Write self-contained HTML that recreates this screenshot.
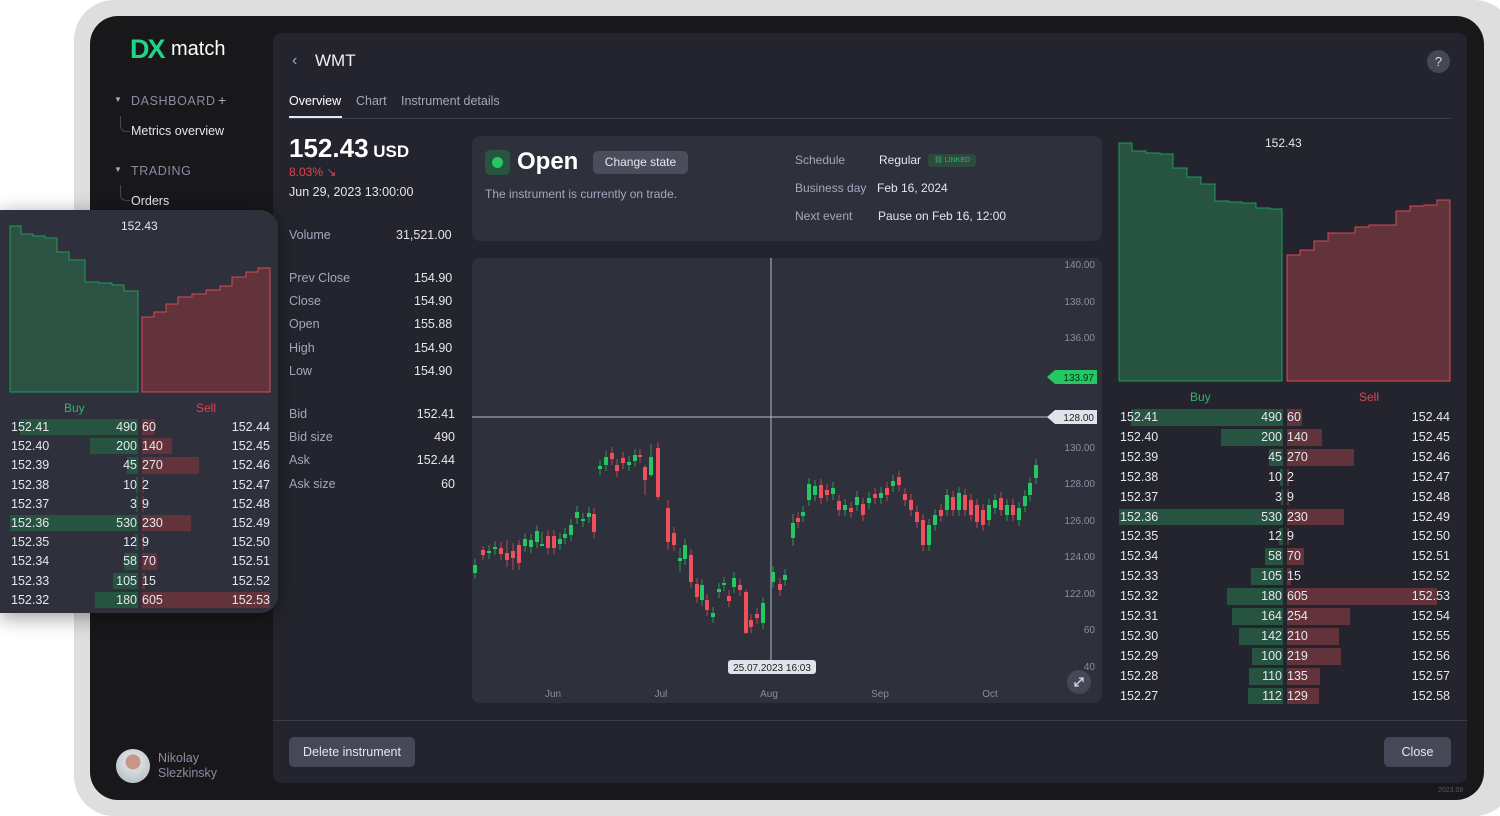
<!DOCTYPE html>
<html><head><meta charset="utf-8">
<style>
*{box-sizing:border-box;margin:0;padding:0}
body{width:1500px;height:816px;overflow:hidden;background:#fff;font-family:"Liberation Sans",sans-serif;position:relative;color:#e6e7ec}
.abs{position:absolute}
.frame{left:74px;top:0;width:1440px;height:816px;background:#dedede;border-radius:40px}
.dev{left:90px;top:16px;width:1394px;height:784px;background:#18181b;border-radius:28px}
.main{left:273px;top:33px;width:1194px;height:750px;background:#23242d;border-radius:8px}
.t{position:absolute;white-space:nowrap}
.muted{color:#a5a8bd}
.card{background:#2e303b;border-radius:8px}
.row{position:absolute;height:18px;font-size:12.5px;line-height:18px}
</style></head><body>
<div class="abs frame"></div>
<div class="abs dev"></div>
<div class="abs main"></div>

<!-- sidebar -->
<div class="t" style="left:130px;top:34px;font-size:27px;font-weight:bold;color:#1fd685;letter-spacing:-2px">DX</div>
<div class="t" style="left:171px;top:38px;font-size:20px;color:#fff">match</div>
<div class="t muted" style="left:114px;top:95px;font-size:8px">▼</div>
<div class="t" style="left:131px;top:94px;font-size:12.5px;letter-spacing:0.6px;color:#8a8da2">DASHBOARD</div>
<div class="t" style="left:218px;top:92px;font-size:14px;color:#a5a8bd">+</div>
<div class="abs" style="left:120px;top:116px;width:10px;height:16px;border-left:1px solid #44465a;border-bottom:1px solid #44465a;border-bottom-left-radius:6px"></div>
<div class="t" style="left:131px;top:124px;font-size:12.5px;color:#e6e7ec">Metrics overview</div>
<div class="t muted" style="left:114px;top:165px;font-size:8px">▼</div>
<div class="t" style="left:131px;top:164px;font-size:12.5px;letter-spacing:0.6px;color:#8a8da2">TRADING</div>
<div class="abs" style="left:120px;top:185px;width:10px;height:16px;border-left:1px solid #44465a;border-bottom:1px solid #44465a;border-bottom-left-radius:6px"></div>
<div class="t" style="left:131px;top:194px;font-size:12.5px">Orders</div>
<div class="abs" style="left:116px;top:749px;width:34px;height:34px;border-radius:50%;background:radial-gradient(circle at 50% 38%,#c99585 0 7px,#d8dde0 8px,#aab5bb 100%)"></div>
<div class="t" style="left:158px;top:751px;font-size:12.5px;color:#8a8da2;line-height:15px">Nikolay<br>Slezkinsky</div>

<!-- header -->
<div class="t" style="left:292px;top:52px;font-size:16px;color:#a5a8bd">‹</div>
<div class="t" style="left:315px;top:51px;font-size:17px;color:#f0f0f4">WMT</div>
<div class="abs" style="left:1427px;top:50px;width:23px;height:23px;border-radius:50%;background:#454857;color:#d8d9e0;font-size:13px;text-align:center;line-height:23px">?</div>
<div class="t" style="left:289px;top:94px;font-size:12.5px;color:#fff">Overview</div>
<div class="t muted" style="left:356px;top:94px;font-size:12.5px">Chart</div>
<div class="t muted" style="left:401px;top:94px;font-size:12.5px">Instrument details</div>
<div class="abs" style="left:289px;top:118px;width:1162px;height:1px;background:#3c3e4d"></div>
<div class="abs" style="left:289px;top:116px;width:53px;height:2px;background:#e6e7ec"></div>

<!-- price stats -->
<div class="t" style="left:289px;top:133px;font-size:26px;font-weight:bold;color:#fff">152.43<span style="font-size:17px"> USD</span></div>
<div class="t" style="left:289px;top:165px;font-size:12px;color:#e5424f">8.03% ↘</div>
<div class="t" style="left:289px;top:185px;font-size:12.5px">Jun 29, 2023 13:00:00</div>
<div class="t muted" style="left:289px;top:228px;font-size:12.5px">Volume</div><div class="t" style="left:396px;top:228px;font-size:12.5px">31,521.00</div>
<div class="t muted" style="left:289px;top:267px;font-size:12.5px;line-height:23.2px">Prev Close<br>Close<br>Open<br>High<br>Low</div>
<div class="t" style="left:414px;top:267px;font-size:12.5px;line-height:23.2px">154.90<br>154.90<br>155.88<br>154.90<br>154.90</div>
<div class="t muted" style="left:289px;top:403px;font-size:12.5px;line-height:23.2px">Bid<br>Bid size<br>Ask<br>Ask size</div>
<div class="t" style="left:400px;top:403px;font-size:12.5px;line-height:23.2px;text-align:right;width:55px">152.41<br>490<br>152.44<br>60</div>

<!-- status card -->
<div class="abs card" style="left:472px;top:136px;width:630px;height:105px"></div>
<div class="abs" style="left:485px;top:150px;width:25px;height:25px;border-radius:5px;background:#27553f"></div>
<div class="abs" style="left:492px;top:157px;width:11px;height:11px;border-radius:50%;background:#23c862"></div>
<div class="t" style="left:517px;top:148px;font-size:24px;font-weight:bold;color:#fff">Open</div>
<div class="abs" style="left:593px;top:151px;width:95px;height:23px;border-radius:5px;background:#4a4d5c;font-size:12px;text-align:center;line-height:23px;color:#e6e7ec">Change state</div>
<div class="t muted" style="left:485px;top:187px;font-size:12px">The instrument is currently on trade.</div>
<div class="t muted" style="left:795px;top:146px;font-size:12px;line-height:28px">Schedule<br>Business day<br>Next event</div>
<div class="t" style="left:879px;top:153px;font-size:12px">Regular</div>
<div class="abs" style="left:928px;top:154px;width:48px;height:13px;border-radius:3px;background:#2d4a3e;color:#2fb56e;font-size:7px;line-height:13px;text-align:center">⛓ LINKED</div>
<div class="t" style="left:877px;top:181px;font-size:12px">Feb 16, 2024</div>
<div class="t" style="left:878px;top:209px;font-size:12px">Pause on Feb 16, 12:00</div>

<!-- chart -->
<div class="abs card" style="left:472px;top:258px;width:630px;height:445px"></div>
<svg class="abs" style="left:0;top:0" width="1500" height="816" id="cs">
<g font-family="Liberation Sans" font-size="10" fill="#8a8da2" text-anchor="end">
<text x="1095" y="268">140.00</text><text x="1095" y="305">138.00</text><text x="1095" y="341">136.00</text>
<text x="1095" y="451">130.00</text><text x="1095" y="487">128.00</text><text x="1095" y="524">126.00</text>
<text x="1095" y="560">124.00</text><text x="1095" y="597">122.00</text><text x="1095" y="633">60</text><text x="1095" y="670">40</text>
</g>
<g font-family="Liberation Sans" font-size="10" fill="#8a8da2" text-anchor="middle">
<text x="553" y="697">Jun</text><text x="661" y="697">Jul</text><text x="769" y="697">Aug</text><text x="880" y="697">Sep</text><text x="990" y="697">Oct</text>
</g>
<line x1="472" y1="417" x2="1048" y2="417" stroke="#b8bac6" stroke-width="1"/>
<line x1="771" y1="258" x2="771" y2="660" stroke="#b8bac6" stroke-width="1"/>
<path d="M1047 377 l8 -7 h42 v14 h-42z" fill="#23c862"/>
<text x="1094" y="381" font-family="Liberation Sans" font-size="10" fill="#0f2a1a" text-anchor="end">133.97</text>
<path d="M1047 417 l8 -7 h42 v14 h-42z" fill="#e2e3ea"/>
<text x="1094" y="421" font-family="Liberation Sans" font-size="10" fill="#222" text-anchor="end">128.00</text>
<rect x="728" y="660" width="88" height="14" rx="3" fill="#e2e3ea"/>
<text x="772" y="671" font-family="Liberation Sans" font-size="10" fill="#222" text-anchor="middle">25.07.2023 16:03</text>
<circle cx="1079" cy="682" r="12" fill="#454857"/>
<path d="M1075 686 l8 -8 M1079 678 h4 v4 M1075 682 v4 h4" stroke="#d8d9e0" stroke-width="1.3" fill="none"/>
<g id="cd"></g>
</svg>
<script>
var d=[[473,'g',565,573],[481,'r',550,555,546,560],[487,'g',551,553],[493,'g',547,549],[499,'r',548,554],[505,'r',553,560,540,567],[511,'r',551,558,543,570],[517,'r',545,563,540,570],[523,'g',539,546],[529,'g',540,547],[535,'g',531,542],[540,'g',544,546,532,546],[546,'r',536,548],[552,'r',536,548],[558,'g',539,544],[563,'g',534,538],[569,'g',525,535],[575,'g',512,518],[581,'g',519,521],[587,'g',513,517],[592,'r',514,532],[598,'g',466,469],[604,'g',457,465],[610,'r',453,459],[615,'r',465,471],[621,'r',458,463],[627,'g',462,465],[633,'g',455,461],[638,'r',455,457],[643,'r',467,480,465,495],[649,'g',457,475,444,477],[656,'r',448,497,442,500],[666,'r',508,542,500,550],[672,'r',533,545],[678,'g',558,561,548,572],[683,'g',545,559],[689,'r',555,582],[695,'r',584,597],[700,'g',585,600],[705,'r',600,610],[711,'g',613,617],[717,'g',589,592],[722,'g',583,585],[727,'r',596,601],[732,'g',578,587],[738,'r',585,590],[744,'r',592,633,590,634],[749,'r',620,627],[755,'r',614,618],[761,'g',603,623],[771,'g',572,582],[778,'r',584,590],[783,'g',575,580],[791,'g',523,538,514,546],[796,'r',518,522],[801,'g',512,516],[807,'g',484,500],[813,'g',486,495],[819,'r',485,498],[825,'r',490,495],[831,'g',488,494],[837,'r',501,510],[843,'g',505,510],[849,'r',508,512],[855,'g',497,505],[861,'r',504,515],[867,'g',498,503],[873,'r',494,498],[879,'g',493,498],[885,'r',488,495],[891,'g',481,486],[897,'r',477,485],[903,'r',494,500],[909,'r',500,510],[915,'r',512,522],[921,'r',520,545],[927,'g',525,545],[933,'g',515,525],[939,'r',510,516],[945,'g',495,510],[951,'r',497,510],[957,'g',493,510],[963,'r',495,510],[969,'r',500,515],[975,'r',505,522],[981,'r',510,525],[987,'g',505,520],[993,'g',500,508],[999,'r',498,510],[1005,'g',505,515],[1011,'r',505,515],[1017,'g',508,520],[1023,'g',496,506],[1028,'g',483,495],[1034,'g',465,478]];
var s='';d.forEach(function(c){var col=c[1]=='g'?'#23c862':'#f0505c',h=c[4]||c[2]-6,l=c[5]||c[3]+6;s+='<line x1="'+(c[0]+2)+'" x2="'+(c[0]+2)+'" y1="'+h+'" y2="'+l+'" stroke="'+col+'" stroke-opacity="0.7"/><rect x="'+c[0]+'" y="'+c[2]+'" width="4" height="'+Math.max(2,c[3]-c[2])+'" fill="'+col+'"/>';});
document.getElementById('cd').innerHTML=s;
</script>

<!-- right depth -->
<svg class="abs" style="left:0;top:0" width="1500" height="816">
<path d="M1119 381 V143 H1132 V151 H1146 V153 H1160 V154 H1173 V168 H1187 V177 H1201 V184 H1215 V201 H1229 V202 H1242 V203 H1256 V208 H1270 V209 H1282 V381Z" fill="#265441" stroke="#1f9c5c" stroke-width="1"/>
<path d="M1287 381 V255 H1300 V250 H1314 V241 H1328 V233 H1341 V233 H1355 V227 H1369 V225 H1383 V225 H1396 V211 H1410 V206 H1424 V205 H1437 V200 H1450 V381Z" fill="#63333c" stroke="#d84a55" stroke-width="1"/>
</svg>
<div class="t" style="left:1265px;top:136px;font-size:12px">152.43</div>
<div class="t" style="left:1190px;top:390px;font-size:12px;color:#2fb56e">Buy</div>
<div class="t" style="left:1359px;top:390px;font-size:12px;color:#e5424f">Sell</div>

<!-- left overlay card -->
<div class="abs" style="left:0;top:210px;width:278px;height:403px;background:#2e303c;border-radius:0 18px 18px 0;box-shadow:0 4px 20px rgba(0,0,0,.4)"></div>
<svg class="abs" style="left:0;top:0" width="300" height="816">
<path d="M10 392 V226 H21 V234 H33 V236 H45 V238 H57 V252 H69 V260 H85 V282 H99 V283 H112 V285 H124 V291 H138 V392Z" fill="#2c5243" stroke="#1f9c5c" stroke-width="1"/>
<path d="M142 392 V317 H154 V312 H166 V304 H178 V297 H192 V294 H206 V290 H220 V286 H232 V277 H246 V272 H258 V268 H270 V392Z" fill="#63333c" stroke="#d84a55" stroke-width="1"/>
</svg>
<div class="t" style="left:121px;top:219px;font-size:12px">152.43</div>
<div class="t" style="left:64px;top:401px;font-size:12px;color:#2fb56e">Buy</div>
<div class="t" style="left:196px;top:401px;font-size:12px;color:#e5424f">Sell</div>

<div id="books"></div>
<script>
var rows=[[152.41,490,60,152.44],[152.40,200,140,152.45],[152.39,45,270,152.46],[152.38,10,2,152.47],[152.37,3,9,152.48],[152.36,530,230,152.49],[152.35,12,9,152.50],[152.34,58,70,152.51],[152.33,105,15,152.52],[152.32,180,605,152.53]];
var more=[[152.31,164,254,152.54],[152.30,142,210,152.55],[152.29,100,219,152.56],[152.28,110,135,152.57],[152.27,112,129,152.58]];
function book(list,top,rh,L,mid,R,bw,sw,bmax,smax,fs){var h='';list.forEach(function(r,i){var y=top+i*rh,b=Math.max(2,r[1]/bmax*bw),s=Math.max(2,r[2]/smax*sw);
h+='<div class="abs" style="left:'+(mid-2-b)+'px;top:'+(y+1)+'px;width:'+b+'px;height:'+(rh-3)+'px;background:#265441"></div>';
h+='<div class="abs" style="left:'+(mid+2)+'px;top:'+(y+1)+'px;width:'+s+'px;height:'+(rh-3)+'px;background:#63333c"></div>';
h+='<div class="row" style="left:'+L+'px;top:'+y+'px;font-size:'+fs+'px">'+r[0].toFixed(2)+'</div>';
h+='<div class="row" style="left:'+(mid-60)+'px;width:57px;text-align:right;top:'+y+'px;font-size:'+fs+'px">'+r[1]+'</div>';
h+='<div class="row" style="left:'+(mid+2)+'px;top:'+y+'px;font-size:'+fs+'px">'+r[2]+'</div>';
h+='<div class="row" style="left:'+(R-60)+'px;width:60px;text-align:right;top:'+y+'px;font-size:'+fs+'px">'+r[3].toFixed(2)+'</div>';});return h;}
document.getElementById('books').innerHTML=book(rows,418,19.2,11,140,270,128,128,530,605,12.5)+book(rows.concat(more),408,19.9,1120,1285,1450,164,150,530,605,12.5);
</script>

<!-- footer -->
<div class="abs" style="left:273px;top:720px;width:1194px;height:1px;background:#3c3e4d"></div>
<div class="abs" style="left:289px;top:737px;width:126px;height:30px;border-radius:5px;background:#454857;font-size:12.5px;line-height:30px;text-align:center">Delete instrument</div>
<div class="abs" style="left:1384px;top:737px;width:67px;height:30px;border-radius:5px;background:#454857;font-size:12.5px;line-height:30px;text-align:center">Close</div>
<div class="t" style="left:1438px;top:787px;font-size:7px;color:#55576a">2023.08</div>
</body></html>
